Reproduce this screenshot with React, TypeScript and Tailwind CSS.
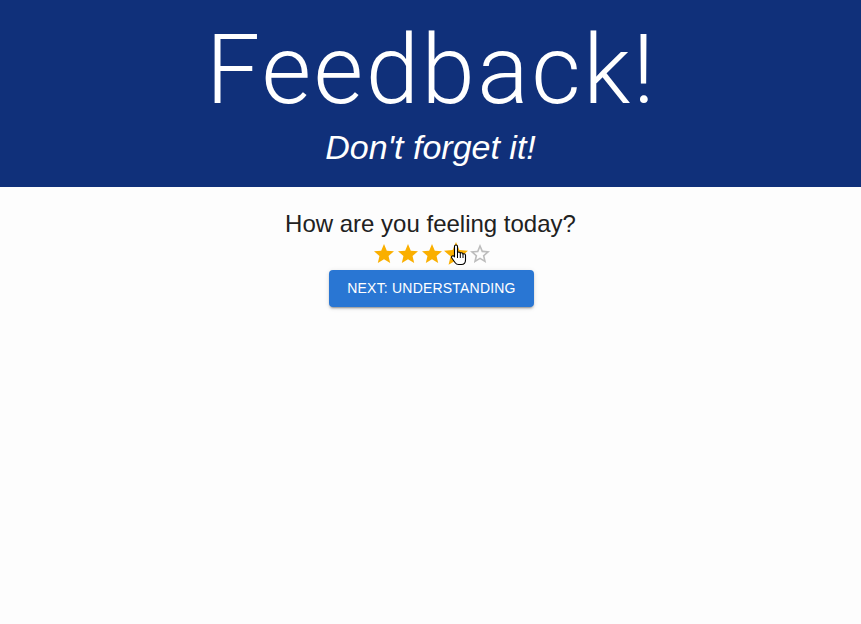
import React from "react";

const STAR = "M12 17.27L18.18 21l-1.64-7.03L22 9.24l-7.19-.61L12 2 9.19 8.63 2 9.24l5.46 4.73L5.82 21z";
const STAR_BORDER =
  "M22 9.24l-7.19-.62L12 2 9.19 8.63 2 9.24l5.46 4.73L5.82 21 12 17.27 18.18 21l-1.63-7.03L22 9.24zM12 15.4l-3.76 2.27 1-4.28-3.32-2.88 4.38-.38L12 6.1l1.71 4.04 4.38.38-3.32 2.88 1 4.28L12 15.4z";

function Star({ filled, big }: { filled: boolean; big?: boolean }) {
  return (
    <span className={"block w-6 h-6 " + (big ? "scale-[1.2]" : "")}>
      <svg viewBox="0 0 24 24" width="24" height="24">
        <path d={filled ? STAR : STAR_BORDER} fill={filled ? "#faaf00" : "#bdbdbd"} />
      </svg>
    </span>
  );
}

function HandCursor() {
  return (
    <svg
      viewBox="0 0 17 22"
      width="17"
      height="22"
      className="absolute left-[78px] top-[2px] pointer-events-none"
    >
      <path
        d="M6 1 C6.8 1 7.5 1.6 7.5 2.5 V8.5 C7.8 8.2 8.3 8 8.8 8 C9.6 8 10.2 8.5 10.3 9.2 C10.6 8.9 11 8.8 11.5 8.8 C12.3 8.8 12.9 9.4 13 10.1 C13.3 9.9 13.6 9.8 14 9.8 C14.8 9.8 15.5 10.5 15.5 11.3 V16 C15.5 18.5 13.8 20.5 11.3 20.5 H8.5 C7 20.5 6 19.8 5.2 18.7 L1.8 14 C1.3 13.3 1.5 12.4 2.2 12 C2.9 11.6 3.7 11.8 4.2 12.4 L4.5 12.8 V2.5 C4.5 1.6 5.2 1 6 1 Z"
        fill="#fff"
        stroke="#000"
        strokeWidth="1.1"
        strokeLinejoin="round"
      />
      <path d="M7.5 8.5 V14 M10.3 9.2 V14 M13 10.1 V14" stroke="#000" strokeWidth="1" fill="none" />
    </svg>
  );
}

export default function App() {
  return (
    <div
      className="min-h-[624px] w-full bg-[#fdfdfd] flex flex-col"
      style={{ fontFamily: '"Liberation Sans", Arial, sans-serif' }}
    >
      <header className="bg-[#10307a] text-white flex flex-col items-center pt-[14px] pb-[19px]">
        <h1
          className="text-[96px] leading-[112px] font-light tracking-[2.5px] pl-[2px]"
          style={{ fontFamily: 'Roboto, "Liberation Sans", sans-serif' }}
        >
          Feedback!
        </h1>
        <h2 className="text-[34px] leading-[42px] italic">Don't forget it!</h2>
      </header>
      <main className="flex flex-col items-center pt-[21px]">
        <p className="text-[24px] leading-[32px] text-[#212121]">How are you feeling today?</p>
        <div className="relative flex mt-[2px] ml-[3px]">
          <Star filled />
          <Star filled />
          <Star filled />
          <Star filled big />
          <Star filled={false} />
          <HandCursor />
        </div>
        <button className="mt-[4px] ml-[2px] bg-[#2976d3] text-white text-[14px] leading-[25px] tracking-[0.2px] px-[18px] py-[6px] rounded-[4px] shadow-[0_3px_1px_-2px_rgba(0,0,0,0.2),0_2px_2px_0_rgba(0,0,0,0.14),0_1px_5px_0_rgba(0,0,0,0.12)]">
          NEXT: UNDERSTANDING
        </button>
      </main>
    </div>
  );
}
